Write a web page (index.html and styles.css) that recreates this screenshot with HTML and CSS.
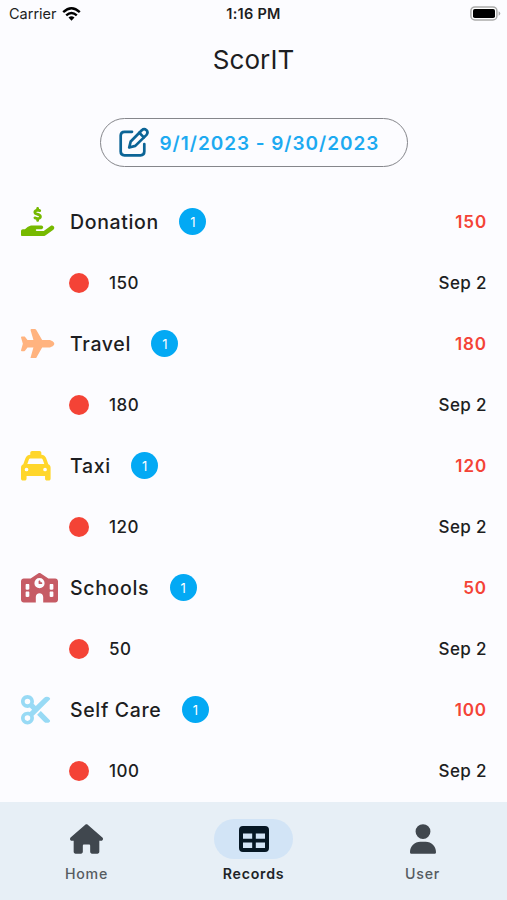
FILE: index.html
```html
<!DOCTYPE html>
<html lang="en">
<head>
<meta charset="utf-8">
<title>ScorIT</title>
<link rel="stylesheet" href="styles.css">
</head>
<body>
<div class="app">
  <header class="status">
    <div class="carrier"><span>Carrier</span>
      <svg width="19" height="14" viewBox="0 0 19 14"><g fill="none" stroke="#000" stroke-width="2.4"><path d="M1.2 5.2Q9.500-2.600 17.800 5.200"/><path d="M4.200 8.300Q9.500 3.500 14.800 8.300"/></g><path d="M6.500 10.500Q9.500 8 12.500 10.500L9.500 13.700Z"/></svg>
    </div>
    <span class="clock">1:16 PM</span>
    <svg class="battery" width="31" height="15" viewBox="0 0 31 15"><rect x=".9" y=".9" width="26" height="13" rx="4" fill="#fff" stroke="#aaa" stroke-width="1.500"/><rect x="3" y="3" width="22" height="9" rx="1.800"/><path d="M28.600 5.200Q32 7.400 28.600 9.700Z" fill="#aaa"/></svg>
  </header>
  <h1 class="title">ScorIT</h1>
  <button class="range">
    <svg width="32" height="32" viewBox="0 0 32 32" fill="none" stroke="#0b6496" stroke-width="2.700" stroke-linecap="round" stroke-linejoin="round"><path d="M14 4.800H6.500Q2.700 4.800 2.700 8.600V24.500Q2.700 28.300 6.500 28.300H22.500Q26.300 28.300 26.300 24.500V17"/><path d="M11.200 20.500L12.700 14.500L23.800 3.200Q26.200 1.200 28.500 3.200Q30.500 5.500 28.500 7.900L17.300 18.900Z"/><path d="M21.300 5.800L25.900 10.400"/></svg>
    <span>9/1/2023 - 9/30/2023</span>
  </button>
  <main class="list">
    <section class="row group"><svg class="icon donation" viewBox="0 0 640 512"><path d="M312 24V34.500c6.400 1.200 12.600 2.700 18.200 4.200c12.800 3.400 20.400 16.600 17 29.400s-16.600 20.400-29.400 17c-10.900-2.900-21.100-4.900-30.200-5c-7.300-.1-14.700 1.700-19.400 4.400c-2.100 1.300-3.100 2.400-3.500 3c-.3 .5-.7 1.200-.7 2.800c0 .3 0 .5 0 .6c.2 .2 .9 1.200 3.300 2.600c5.800 3.500 14.400 6.200 27.400 10.100l.9 .3c11.100 3.300 25.900 7.800 37.900 15.300c13.700 8.600 26.100 22.900 26.400 44.900c.3 22.500-11.400 38.900-26.700 48.500c-6.700 4.100-13.900 7-21.300 8.800V232c0 13.300-10.700 24-24 24s-24-10.700-24-24V220.600c-9.500-2.300-18.200-5.300-25.600-7.800c-2.100-.7-4.100-1.400-6-2c-12.600-4.200-19.400-17.800-15.200-30.400s17.800-19.400 30.400-15.200c2.600 .9 5 1.700 7.300 2.500c13.600 4.600 23.400 7.900 33.900 8.300c8 .3 15.100-1.600 19.200-4.100c1.900-1.200 2.800-2.200 3.200-2.900c.4-.6 .9-1.800 .8-4.100l0-.2c0-1 0-2.100-4-4.600c-5.700-3.600-14.300-6.400-27.100-10.300l-1.900-.6c-10.800-3.200-25-7.500-36.400-14.400c-13.500-8.100-26.500-22-26.600-44.100c-.1-22.900 12.900-38.600 27.700-47.400c6.400-3.800 13.300-6.400 20.200-8.200V24c0-13.300 10.700-24 24-24s24 10.700 24 24zM568.200 336.300c13.100 17.800 9.300 42.800-8.500 55.900L433.100 485.500c-23.400 17.200-51.600 26.500-80.700 26.500H192 32c-17.700 0-32-14.300-32-32V416c0-17.700 14.300-32 32-32H68.800l44.900-36c22.700-18.200 50.900-28 80-28H272h16 64c17.700 0 32 14.300 32 32s-14.300 32-32 32H288 272c-8.800 0-16 7.200-16 16s7.200 16 16 16H392.600l119.700-88.200c17.800-13.100 42.800-9.300 55.900 8.500z"/></svg><h2>Donation</h2><span class="badge">1</span><b>150</b></section>
    <div class="row entry"><i></i><span>150</span><time>Sep 2</time></div>
    <section class="row group"><svg class="icon travel" viewBox="0 0 640 512"><path d="M482.300 192c34.200 0 93.700 29 93.700 64c0 36-59.500 64-93.700 64l-116.600 0L265.200 495.900c-5.700 10-16.300 16.100-27.800 16.100l-56.200 0c-10.600 0-18.300-10.200-15.400-20.400l49-171.600L112 320 68.800 377.600c-3 4-7.800 6.400-12.800 6.400l-42 0c-7.800 0-14-6.300-14-14c0-1.300 .2-2.600 .5-3.900L32 256 .5 145.900c-.4-1.300-.5-2.600-.5-3.900c0-7.800 6.300-14 14-14l42 0c5 0 9.800 2.400 12.800 6.400L112 192l102.900 0-49-171.600C162.900 10.200 170.600 0 181.200 0l56.200 0c11.500 0 22.100 6.200 27.800 16.100L365.700 192l116.600 0z"/></svg><h2>Travel</h2><span class="badge">1</span><b>180</b></section>
    <div class="row entry"><i></i><span>180</span><time>Sep 2</time></div>
    <section class="row group"><svg class="icon taxi" viewBox="0 0 640 512"><path d="M192 0c-17.700 0-32 14.300-32 32V64c0 .1 0 .1 0 .2c-38.600 2.200-72.300 27.300-85.200 64.100L39.600 228.800C16.400 238.400 0 261.300 0 288V432v48c0 17.700 14.300 32 32 32H64c17.700 0 32-14.300 32-32V432H416v48c0 17.700 14.300 32 32 32h32c17.700 0 32-14.300 32-32V432 288c0-26.700-16.400-49.600-39.600-59.200L437.200 128.300c-12.900-36.800-46.600-62-85.200-64.100c0-.1 0-.1 0-.2V32c0-17.700-14.300-32-32-32H192zM165.400 128H346.600c13.600 0 25.700 8.600 30.200 21.400L402.900 224H109.100l26.100-74.600c4.500-12.800 16.600-21.400 30.200-21.400zM96 288a32 32 0 1 1 0 64 32 32 0 1 1 0-64zm288 32a32 32 0 1 1 64 0 32 32 0 1 1 -64 0z"/></svg><h2>Taxi</h2><span class="badge">1</span><b>120</b></section>
    <div class="row entry"><i></i><span>120</span><time>Sep 2</time></div>
    <section class="row group"><svg class="icon schools" viewBox="0 0 640 512"><path d="M337.800 5.400C327-1.800 313-1.800 302.200 5.400L166.300 96H48C21.500 96 0 117.500 0 144V464c0 26.500 21.500 48 48 48H256V416c0-35.300 28.700-64 64-64s64 28.700 64 64v96H592c26.500 0 48-21.500 48-48V144c0-26.500-21.500-48-48-48H473.700L337.800 5.400zM96 192h32c8.800 0 16 7.200 16 16v64c0 8.800-7.200 16-16 16H96c-8.800 0-16-7.200-16-16V208c0-8.800 7.200-16 16-16zm400 16c0-8.800 7.200-16 16-16h32c8.800 0 16 7.200 16 16v64c0 8.800-7.200 16-16 16H512c-8.800 0-16-7.200-16-16V208zM96 320h32c8.800 0 16 7.200 16 16v64c0 8.800-7.200 16-16 16H96c-8.800 0-16-7.200-16-16V336c0-8.800 7.200-16 16-16zm400 16c0-8.800 7.200-16 16-16h32c8.800 0 16 7.200 16 16v64c0 8.800-7.200 16-16 16H512c-8.800 0-16-7.200-16-16V336zM232 176a88 88 0 1 1 176 0 88 88 0 1 1 -176 0zm88-48c-8.800 0-16 7.200-16 16v32c0 8.800 7.200 16 16 16h32c8.800 0 16-7.200 16-16s-7.200-16-16-16H336V144c0-8.800-7.200-16-16-16z"/></svg><h2>Schools</h2><span class="badge">1</span><b>50</b></section>
    <div class="row entry"><i></i><span>50</span><time>Sep 2</time></div>
    <section class="row group"><svg class="icon care" viewBox="0 0 640 512"><path d="M256 192l-39.500-39.500c4.900-12.600 7.500-26.200 7.500-40.500C224 50.100 173.900 0 112 0S0 50.100 0 112s50.100 112 112 112c14.300 0 27.900-2.700 40.500-7.500L192 256l-39.500 39.500c-12.600-4.900-26.200-7.500-40.500-7.500C50.100 288 0 338.100 0 400s50.100 112 112 112s112-50.100 112-112c0-14.300-2.700-27.900-7.500-40.500L499.200 76.800c7.100-7.100 7.100-18.500 0-25.600c-28.300-28.300-74.100-28.300-102.400 0L256 192zm22.600 150.600L396.800 460.800c28.300 28.300 74.100 28.300 102.400 0c7.100-7.100 7.100-18.500 0-25.600L342.600 278.600l-64 64zM64 112a48 48 0 1 1 96 0 48 48 0 1 1 -96 0zm48 240a48 48 0 1 1 0 96 48 48 0 1 1 0-96z"/></svg><h2>Self Care</h2><span class="badge">1</span><b>100</b></section>
    <div class="row entry"><i></i><span>100</span><time>Sep 2</time></div>
  </main>
  <nav class="tabs">
    <a class="tab"><span class="pill"><svg width="33" height="30" viewBox="0 0 576 512"><path d="M575.800 255.500c0 18-15 32.100-32 32.100h-32V480c0 18-14 32-32 32H384c-18 0-32-14-32-32V368c0-9-7-16-16-16H240c-9 0-16 7-16 16v112c0 18-14 32-32 32H96c-18 0-32-14-32-32V287.600H32c-18 0-32-14-32-32.100c0-9 3-17 10-24L266.400 8c7-7 15-8 22-8s15 2 21 7L564.800 231.500c8 7 12 15 11 24z"/></svg></span>Home</a>
    <a class="tab active"><span class="pill"><svg width="30" height="26" viewBox="0 0 30 26"><path fill-rule="evenodd" d="M4 0H26Q30 0 30 4V22Q30 26 26 26H4Q0 26 0 22V4Q0 0 4 0ZM4 7.500V12.700H13.200V7.500ZM16.800 7.500V12.700H26V7.500ZM4 16.500V22H13.200V16.500ZM16.800 16.500V22H26V16.500Z"/></svg></span>Records</a>
    <a class="tab"><span class="pill"><svg width="26" height="30" viewBox="0 0 448 512"><path d="M224 256A128 128 0 1 0 224 0a128 128 0 1 0 0 256zm-45.700 48C79.800 304 0 383.800 0 482.300C0 498.700 13.300 512 29.700 512H418.300c16.400 0 29.700-13.300 29.700-29.700C448 383.800 368.200 304 269.700 304H178.300z"/></svg></span>User</a>
  </nav>
</div>
</body>
</html>
```
FILE: styles.css
```css
* { box-sizing: border-box; }
body { margin: 0; background: #fcfcff; color: #1d1e22; font-family: Inter, sans-serif; }
svg { display: block; flex: none; }
.app { height: 900px; display: flex; flex-direction: column; overflow: hidden; }
.status { height: 28px; flex: none; display: grid; grid-template-columns: 1fr auto 1fr; align-items: center; padding: 0 6px 1px 9px; font-size: 14.5px; }
.carrier { display: flex; align-items: center; gap: 5px; }
.clock { font-weight: 600; font-size: 14.500px; letter-spacing: .25px; margin-right: 3px; }
.battery { justify-self: end; }
.title { margin: 14px 0 0; height: 36px; line-height: 36px; flex: none; text-align: center; font-size: 26px; font-weight: 400; letter-spacing: .1px; }
.range { align-self: center; margin: 40px 0 0; flex: none; width: 308px; height: 49px; padding: 0 0 0 17px; border: 1px solid #85868b; border-radius: 25px; background: transparent; display: flex; align-items: center; gap: 10px; font: 600 19px Inter, sans-serif; letter-spacing: .95px; color: #1daaf1; white-space: nowrap; }
.range span { padding-top: 1px; }
.list { flex: 1; min-height: 0; padding: 24px 20px 0 20.500px; }
.row { height: 61.060px; display: flex; align-items: center; }
.icon { width: 37px; height: 29.600px; margin-right: 12.500px; }
.donation { fill: #76b900; }
.travel { fill: #ffb37f; }
.taxi { fill: #ffd62b; }
.schools { fill: #c65b65; }
.care { fill: #98daf5; }
h2 { margin: 0; font-size: 19.500px; font-weight: 500; letter-spacing: .65px; }
.badge { width: 27px; height: 27px; margin-left: 20.500px; border-radius: 50%; background: #03a9f4; color: #fff; display: grid; place-items: center; font-size: 13px; }
b { margin-left: auto; color: #f44336; font-size: 17px; font-weight: 600; letter-spacing: .9px; }
.entry { padding-left: 48.500px; font-size: 17px; font-weight: 500; letter-spacing: .5px; }
i { width: 20px; height: 20px; margin-right: 20px; border-radius: 50%; background: #f44336; }
time { margin-left: auto; letter-spacing: .4px; }
.tabs { height: 98px; flex: none; background: #e7eff6; display: grid; grid-template-columns: repeat(3, 1fr); padding-top: 17px; }
.tab { display: flex; flex-direction: column; align-items: center; gap: 5px; font-size: 14.200px; line-height: 19px; font-weight: 500; letter-spacing: .75px; color: #565b61; fill: #40474e; }
.tab:first-child { padding-left: 4px; }
.pill { width: 79px; height: 40px; border-radius: 20px; display: grid; place-items: center; }
.active { color: #202327; fill: #061724; font-weight: 600; }
.active .pill { background: #d2e4f6; }
```
